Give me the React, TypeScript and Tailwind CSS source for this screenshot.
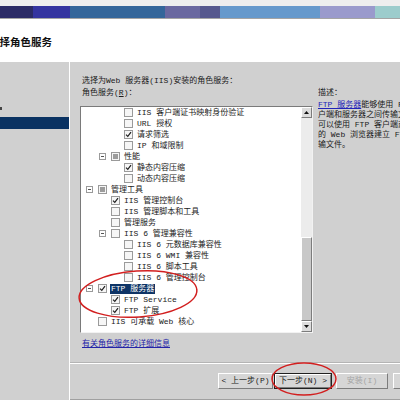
import React from 'react';

type Row = { t: string; lv: 1 | 2 | 3; s: 'u' | 'c' | 'i'; exp?: boolean; sel?: boolean };

const rows: Row[] = [
  { t: 'IIS 客户端证书映射身份验证', lv: 3, s: 'u' },
  { t: 'URL 授权', lv: 3, s: 'u' },
  { t: '请求筛选', lv: 3, s: 'c' },
  { t: 'IP 和域限制', lv: 3, s: 'u' },
  { t: '性能', lv: 2, s: 'i', exp: true },
  { t: '静态内容压缩', lv: 3, s: 'c' },
  { t: '动态内容压缩', lv: 3, s: 'u' },
  { t: '管理工具', lv: 1, s: 'i', exp: true },
  { t: 'IIS 管理控制台', lv: 2, s: 'c' },
  { t: 'IIS 管理脚本和工具', lv: 2, s: 'u' },
  { t: '管理服务', lv: 2, s: 'u' },
  { t: 'IIS 6 管理兼容性', lv: 2, s: 'u', exp: true },
  { t: 'IIS 6 元数据库兼容性', lv: 3, s: 'u' },
  { t: 'IIS 6 WMI 兼容性', lv: 3, s: 'u' },
  { t: 'IIS 6 脚本工具', lv: 3, s: 'u' },
  { t: 'IIS 6 管理控制台', lv: 3, s: 'u' },
  { t: 'FTP 服务器', lv: 1, s: 'c', exp: true, sel: true },
  { t: 'FTP Service', lv: 2, s: 'c' },
  { t: 'FTP 扩展', lv: 2, s: 'c' },
  { t: 'IIS 可承载 Web 核心', lv: 1, s: 'u' },
];

const lvClass: Record<number, string> = { 1: 'pl-[5px]', 2: 'pl-[18px]', 3: 'pl-[31px]' };

function Box({ s }: { s: Row['s'] }) {
  return (
    <div className="w-[9px] h-[9px] mr-[4px] shrink-0 border border-[#9a9a9a] bg-[#f6f6f6] flex items-center justify-center">
      {s === 'c' && (
        <svg width="7" height="7" viewBox="0 0 7 7">
          <path d="M1 3.6 L2.8 5.4 L6 1.2" fill="none" stroke="#1e1e1e" strokeWidth="1.2" />
        </svg>
      )}
      {s === 'i' && <div className="w-[5px] h-[5px] bg-[#9c9c9c]" />}
    </div>
  );
}

function Expander({ show }: { show?: boolean }) {
  return (
    <div className="w-[12px] shrink-0 flex items-center">
      {show && (
        <div className="w-[7px] h-[7px] border border-[#9a9a9a] bg-white flex items-center justify-center">
          <div className="w-[3px] h-px bg-[#555]" />
        </div>
      )}
    </div>
  );
}

function Btn({ children, def, dis, w }: { children: React.ReactNode; def?: boolean; dis?: boolean; w: string }) {
  return (
    <div className={`${w} h-[16px] shrink-0 ${def ? 'border border-[#202020]' : ''}`}>
      <div className="w-full h-full border-t border-l border-white border-r border-b border-r-[#7c7c7c] border-b-[#7c7c7c] bg-[#d6d6d6] flex items-center justify-center">
        <span className={`text-[8px] leading-none ${dis ? 'text-[#a4a4a4]' : 'text-[#1a1a1a]'}`}>{children}</span>
      </div>
    </div>
  );
}

export default function App() {
  return (
    <div
      className="w-[400px] h-[400px] overflow-hidden relative bg-[#d0d0d0] text-[#1a1a1a]"
      style={{ fontFamily: '"Liberation Mono", "Noto Sans CJK SC", monospace' }}
    >
      {/* top strip */}
      <div className="h-[6px] bg-[#eeeeee]" />
      <div className="h-[12px] flex">
        <div className="w-[33px] bg-[#2b2b66]" />
        <div className="w-[37px] bg-[#3434a0]" />
        <div className="w-[95px] bg-[#34669a]" />
        <div className="w-[35px] bg-[#6a68a0]" />
        <div className="w-[20px] bg-[#56588e]" />
        <div className="w-[100px] bg-[#6699cc]" />
        <div className="w-[55px] bg-[#9a9acc]" />
        <div className="flex-1 bg-[#9ccccc]" />
      </div>
      <div className="h-px bg-[#a4a4a4]" />
      {/* header */}
      <div className="h-[43px] bg-white flex items-center pt-[2px] overflow-hidden">
        <span
          className="ml-[-11px] text-[10.5px] font-bold whitespace-nowrap text-[#111]"
          style={{ fontFamily: '"Noto Sans CJK SC", sans-serif' }}
        >
          选择角色服务
        </span>
      </div>
      {/* body */}
      <div className="flex h-[338px]">
        {/* left nav */}
        <div className="w-[70px] shrink-0 border-r border-white relative">
          <div className="mt-[45px] ml-0 w-[2px] h-[3px] bg-[#444]" />
          <div className="mt-[7px] h-[12px] bg-[#0a3262]" />
        </div>
        {/* right */}
        <div className="flex-1 flex flex-col">
          <div className="h-[300px] flex">
            <div className="w-[243px] shrink-0 pl-[10px] pt-[13px] flex flex-col">
              <div className="h-[12px] leading-[12px] text-[8px] pl-[2px] whitespace-nowrap">选择为Web 服务器(IIS)安装的角色服务：</div>
              <div className="h-[12px] leading-[12px] text-[8px] pl-[2px] whitespace-nowrap">角色服务(<span className="underline">R</span>)：</div>
              <div className="mt-[7px] w-[233px] h-[227px] border-t border-l border-[#7a7a7a] border-r border-b border-r-[#f2f2f2] border-b-[#f2f2f2] bg-white flex">
                <div className="flex-1 overflow-hidden">
                  <div className="mt-0">
                    {rows.map((r, i) => (
                      <div key={i} className={`h-[11px] flex items-center ${lvClass[r.lv]}`}>
                        <Expander show={r.exp} />
                        <Box s={r.s} />
                        <span
                          className={`text-[8px] leading-[10px] whitespace-nowrap ${
                            r.sel ? 'bg-[#0e3466] text-white px-px ml-[-1px]' : ''
                          }`}
                        >
                          {r.t}
                        </span>
                      </div>
                    ))}
                  </div>
                </div>
                {/* scrollbar */}
                <div className="w-[11px] shrink-0 flex flex-col">
                  <div className="h-[11px] border-t border-l border-white border-r border-b border-r-[#7c7c7c] border-b-[#7c7c7c] bg-[#dcdcdc] flex items-center justify-center">
                    <svg width="5" height="3" viewBox="0 0 5 3">
                      <path d="M0 3 L2.5 0 L5 3 Z" fill="#111" />
                    </svg>
                  </div>
                  <div className="h-[119px] bg-[#ececec]" />
                  <div className="h-[84px] border-t border-l border-white border-r border-b border-r-[#7c7c7c] border-b-[#7c7c7c] bg-[#c8c8c8]" />
                  <div className="h-[11px] border-t border-l border-white border-r border-b border-r-[#7c7c7c] border-b-[#7c7c7c] bg-[#dcdcdc] flex items-center justify-center">
                    <svg width="5" height="3" viewBox="0 0 5 3">
                      <path d="M0 0 L2.5 3 L5 0 Z" fill="#111" />
                    </svg>
                  </div>
                </div>
              </div>
              <div className="mt-[5px] h-[12px] leading-[12px] text-[8px] pl-[2px] text-[#2424a8] underline whitespace-nowrap">
                有关角色服务的详细信息
              </div>
            </div>
            <div className="ml-[5px] flex-1 pt-[25px] overflow-hidden text-[8px] whitespace-nowrap">
              <div className="h-[12px] leading-[12px]">描述：</div>
              <div className="mt-px leading-[10px]">
                <div>
                  <span className="text-[#2222b8] underline">FTP 服务器</span>能够使用 FTP 协议在客
                </div>
                <div>户端和服务器之间传输文件。用户</div>
                <div>可以使用 FTP 客户端或支持 FTP</div>
                <div>的 Web 浏览器建立 FTP 连接以传</div>
                <div>输文件。</div>
              </div>
            </div>
          </div>
          <div className="h-px bg-[#b4b4b4]" />
          <div className="h-px bg-white" />
          <div className="flex-1 flex pt-[9px] pl-[148px]">
            <Btn w="w-[55px]">&lt; 上一步(P)</Btn>
            <div className="ml-[1px]">
              <Btn w="w-[58px]" def>
                下一步(N) &gt;
              </Btn>
            </div>
            <div className="ml-[4px]">
              <Btn w="w-[52px]" dis>
                安装(I)
              </Btn>
            </div>
            <div className="ml-[5px]">
              <Btn w="w-[52px]">取消</Btn>
            </div>
          </div>
          <div className="h-px bg-[#a0a0a0]" />
        </div>
      </div>
      {/* annotations */}
      <svg className="absolute left-0 top-0 pointer-events-none" width="400" height="400" viewBox="0 0 400 400">
        <ellipse cx="138" cy="294" rx="59" ry="23" transform="rotate(-4 138 294)" fill="none" stroke="#d21f1f" strokeWidth="1.5" />
        <ellipse cx="304" cy="379" rx="32" ry="16" fill="none" stroke="#d21f1f" strokeWidth="1.5" />
      </svg>
    </div>
  );
}
